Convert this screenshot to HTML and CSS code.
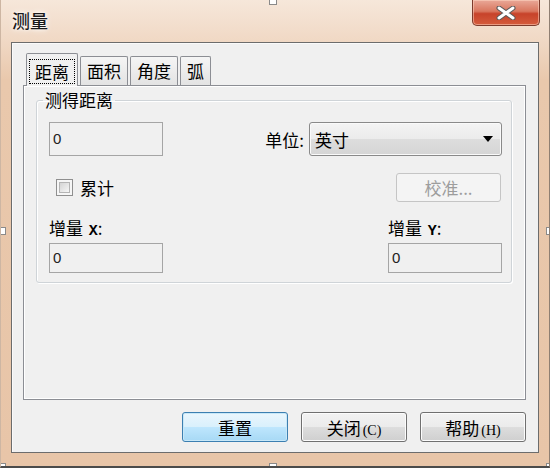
FILE: index.html
```html
<!DOCTYPE html>
<html lang="zh-CN">

<head>
    <meta charset="UTF-8">
    <meta name="viewport" content="width=device-width, initial-scale=1.0">
    <title>测量</title>
    <link rel="stylesheet" href="styles.css">
</head>

<body>
    <div class="window">
        <div class="titlebar">
            <span class="title">测量</span>
            <button class="close-btn" aria-label="关闭">
                <svg width="22" height="14" viewBox="0 0 22 14">
                    <path d="M4 2 L18 12 M18 2 L4 12" stroke="#5a5a5a" stroke-width="5" stroke-linecap="round" />
                    <path d="M4 2 L18 12 M18 2 L4 12" stroke="#ffffff" stroke-width="3" stroke-linecap="round" />
                </svg>
            </button>
        </div>

        <div class="client">
            <div class="tabs">
                <div class="tab active"><span class="focus">距离</span></div>
                <div class="tab">面积</div>
                <div class="tab">角度</div>
                <div class="tab">弧</div>
            </div>

            <div class="pane">
                <fieldset class="group">
                    <legend>测得距离</legend>

                    <div class="row">
                        <div class="field-input">0</div>
                        <div class="unit">
                            <span class="unit-label">单位:</span>
                            <div class="select">
                                <span>英寸</span>
                                <span class="arrow"></span>
                            </div>
                        </div>
                    </div>

                    <div class="row row-check">
                        <label class="check">
                            <span class="check-box"><span class="check-inner"></span></span>
                            累计
                        </label>
                        <button class="calib" disabled>校准...</button>
                    </div>

                    <div class="row row-delta">
                        <div class="delta">
                            <div class="delta-label">增量 <b class="axis">X</b>:</div>
                            <div class="field-input short">0</div>
                        </div>
                        <div class="delta">
                            <div class="delta-label">增量 <b class="axis">Y</b>:</div>
                            <div class="field-input short">0</div>
                        </div>
                    </div>
                </fieldset>
            </div>

            <div class="actions">
                <button class="btn default">重置</button>
                <button class="btn">关闭<span class="key">(C)</span></button>
                <button class="btn">帮助<span class="key">(H)</span></button>
            </div>
        </div>

        <!-- selection handles from the capture tool -->
        <span class="handle" style="left: 268px; top: -3px;"></span>
        <span class="handle" style="left: -3px; top: 227px;"></span>
        <span class="handle" style="left: 545px; top: 227px;"></span>
        <span class="handle" style="left: 268px; top: 463px;"></span>
        <span class="handle" style="left: -3px; top: 463px;"></span>
        <span class="handle" style="left: 545px; top: 463px;"></span>
    </div>
</body>

</html>
```

FILE: styles.css
```css
body {
    margin: 0;
    padding: 0;
    background-color: #ffffff;
    font-family: "Noto Sans CJK SC", "Noto Sans", sans-serif;
    color: #000;
}

.window {
    position: relative;
    width: 550px;
    height: 468px;
    box-sizing: border-box;
    padding: 0 10px 13px 10px;
    display: flex;
    flex-direction: column;
    background: linear-gradient(to bottom, #f6e7da 0, #f0d8c4 42px, #e9c8ac 80px, #e8c5a8 100%);
    border-left: 1px solid #cdb6a3;
    border-right: 1px solid #8f7f72;
    border-bottom: 2px solid #4b4b4b;
    overflow: hidden;
}

.titlebar {
    height: 42px;
    display: flex;
    align-items: flex-start;
    justify-content: space-between;
    flex-shrink: 0;
}

.title {
    font-size: 18px;
    font-weight: 500;
    line-height: 24px;
    padding-top: 8px;
    padding-left: 1px;
    color: #1a1a1a;
    text-shadow: 0 0 6px #fff, 0 0 3px #fff;
}

.close-btn {
    width: 68px;
    height: 26px;
    margin-right: -1px;
    border: 1px solid #7d3b2c;
    border-top: none;
    border-radius: 0 0 5px 5px;
    background: linear-gradient(to bottom, #e9a898 0%, #d9775f 45%, #c7432a 55%, #d55c3d 100%);
    box-shadow: inset 0 0 0 1px rgba(255, 220, 200, 0.5);
    display: flex;
    align-items: center;
    justify-content: center;
    padding: 0;
}

.client {
    flex: 1;
    display: flex;
    flex-direction: column;
    background-color: #f0f0f0;
    border: 1px solid #6c6c6c;
    padding: 10px 12px 10px 11px;
    box-shadow: inset 1px 1px 0 #fafafa;
}

/* tabs */
.tabs {
    display: flex;
    align-items: flex-end;
    padding-left: 3px;
    height: 32px;
    position: relative;
    z-index: 1;
}

.tab {
    height: 29px;
    box-sizing: border-box;
    padding: 0 6px;
    margin-left: 2px;
    font-size: 17px;
    line-height: 27px;
    border: 1px solid #8c8e94;
    border-bottom: none;
    border-radius: 2px 2px 0 0;
    background: linear-gradient(to bottom, #f5f5f5, #e3e3e3);
}

.tab.active {
    height: 33px;
    margin-left: 0;
    margin-bottom: -1px;
    padding: 0 2px;
    background: #f0f0f0;
    border-color: #8c8e94;
    display: flex;
    align-items: center;
}

.focus {
    display: block;
    border: 1px dotted #000;
    padding: 0 5px;
    line-height: 23px;
    margin-top: 2px;
}

.pane {
    flex: 1;
    border: 1px solid #8c8e94;
    background-color: #f0f0f0;
    box-shadow: inset 1px 1px 0 #ffffff, inset -1px -1px 0 #ffffff;
    padding: 4px 13px 0 12px;
}

/* group box */
.group {
    margin: 0;
    border: 1px solid #cfd4d8;
    border-radius: 3px;
    padding: 12px 9px 9px 12px;
    box-shadow: inset 1px 1px 0 #ffffff, 1px 1px 0 #ffffff;
}

.group legend {
    font-size: 17px;
    line-height: 20px;
    padding: 0 2px;
    margin-left: -6px;
}

.row {
    display: flex;
    justify-content: space-between;
    align-items: center;
}

.field-input {
    width: 114px;
    height: 34px;
    box-sizing: border-box;
    border: 1px solid #a5a5a5;
    background-color: #f0f0f0;
    font-family: "Liberation Sans", Arial, sans-serif;
    font-size: 15px;
    line-height: 32px;
    padding-left: 3px;
    color: #222;
}

.field-input.short {
    height: 30px;
    line-height: 28px;
}

.unit {
    display: flex;
    align-items: center;
    gap: 5px;
}

.unit-label {
    font-size: 17px;
}

.select {
    width: 193px;
    height: 34px;
    box-sizing: border-box;
    border: 1px solid #8a8a8a;
    border-radius: 3px;
    background: linear-gradient(to bottom, #f4f4f4 0%, #ebebeb 50%, #dddddd 51%, #d5d5d5 100%);
    box-shadow: inset 0 0 0 1px #fafafa;
    display: flex;
    align-items: center;
    justify-content: space-between;
    padding: 0 8px 0 5px;
    font-size: 17px;
}

.arrow {
    width: 0;
    height: 0;
    border-left: 5px solid transparent;
    border-right: 5px solid transparent;
    border-top: 6px solid #000;
}

.row-check {
    margin-top: 17px;
    height: 29px;
}

.check {
    display: flex;
    align-items: center;
    gap: 7px;
    margin-left: 7px;
    font-size: 17px;
}

.check-box {
    width: 17px;
    height: 17px;
    box-sizing: border-box;
    border: 1px solid #8f8f8f;
    background: #f6f6f6;
    padding: 2px;
}

.check-inner {
    display: block;
    width: 100%;
    height: 100%;
    box-sizing: border-box;
    border: 1px solid #b4b4b4;
    background: linear-gradient(135deg, #d4d4d4, #f6f6f6);
}

.calib {
    width: 105px;
    height: 29px;
    margin-right: 1px;
    border: 1px solid #c5c5c5;
    border-radius: 3px;
    background-color: #f4f4f4;
    color: #9d9d9d;
    font-family: "Noto Sans CJK SC", sans-serif;
    font-size: 17px;
    padding: 0;
}

.row-delta {
    margin-top: 16px;
    align-items: flex-start;
}

.delta-label {
    font-size: 17px;
    line-height: 20px;
    margin-bottom: 1px;
}

.axis {
    font-family: "Liberation Mono", "DejaVu Sans Mono", monospace;
    font-size: 15px;
    font-weight: bold;
    margin-left: 2px;
}

/* bottom buttons */
.actions {
    display: flex;
    justify-content: flex-end;
    gap: 13px;
    margin-top: 12px;
}

.btn {
    width: 106px;
    height: 30px;
    border: 1px solid #707070;
    border-radius: 3px;
    background: linear-gradient(to bottom, #f2f2f2 0%, #ebebeb 50%, #dddddd 51%, #cfcfcf 100%);
    box-shadow: inset 0 0 0 1px #fcfcfc;
    font-family: "Noto Sans CJK SC", sans-serif;
    font-size: 17px;
    color: #000;
    padding: 0;
}

.btn.default {
    border-color: #3c7fb1;
    background: linear-gradient(to bottom, #eaf6fd 0%, #d9f0fc 50%, #bee6fd 51%, #a7d9f5 100%);
    box-shadow: inset 0 0 0 1px #c8e8f8;
}

.key {
    font-family: "Liberation Serif", serif;
    font-size: 14px;
    margin-left: 2px;
}

.handle {
    position: absolute;
    width: 6px;
    height: 6px;
    background: #ffffff;
    border: 1px solid #8a8a8a;
}
```
